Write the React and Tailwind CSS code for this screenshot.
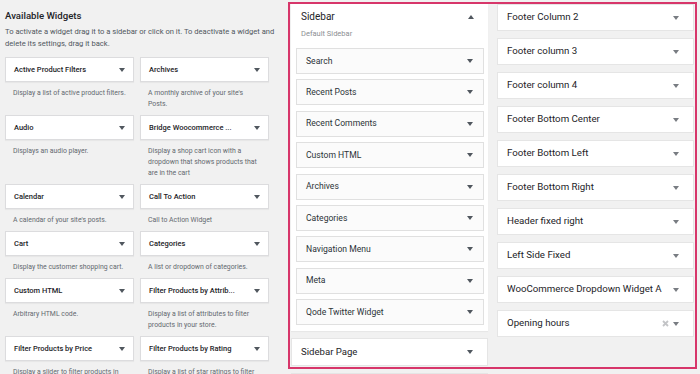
import React from 'react'

const available = [
  ['Active Product Filters', ['Display a list of active product filters.']],
  ['Archives', ["A monthly archive of your site's", 'Posts.']],
  ['Audio', ['Displays an audio player.']],
  ['Bridge Woocommerce ...', ['Display a shop cart icon with a', 'dropdown that shows products that', 'are in the cart']],
  ['Calendar', ["A calendar of your site's posts."]],
  ['Call To Action', ['Call to Action Widget']],
  ['Cart', ['Display the customer shopping cart.']],
  ['Categories', ['A list or dropdown of categories.']],
  ['Custom HTML', ['Arbitrary HTML code.']],
  ['Filter Products by Attrib...', ['Display a list of attributes to filter', 'products in your store.']],
  ['Filter Products by Price', ['Display a slider to filter products in', 'your store.']],
  ['Filter Products by Rating', ['Display a list of star ratings to filter', 'products in your store.']],
]

const sidebarWidgets = [
  'Search',
  'Recent Posts',
  'Recent Comments',
  'Custom HTML',
  'Archives',
  'Categories',
  'Navigation Menu',
  'Meta',
  'Qode Twitter Widget',
]

const areas = [
  'Footer Column 2',
  'Footer column 3',
  'Footer column 4',
  'Footer Bottom Center',
  'Footer Bottom Left',
  'Footer Bottom Right',
  'Header fixed right',
  'Left Side Fixed',
  'WooCommerce Dropdown Widget A',
  'Opening hours',
]

function Arrow({ up = false, className = 'text-[#50575e]' }) {
  return (
    <svg width="6" height="4" viewBox="0 0 6 4" className={className}>
      <path d={up ? 'M0 4h6L3 0z' : 'M0 0h6L3 4z'} fill="currentColor" />
    </svg>
  )
}

function App() {
  return (
    <div
      className="relative flex h-[374px] w-[700px] overflow-hidden bg-[#f1f1f1] text-[#1d2327]"
      style={{ fontFamily: 'Roboto, "Open Sans", sans-serif' }}
    >
      {/* available widgets */}
      <div className="w-[269px] shrink-0 pl-[5px]">
        <h2 className="mt-[8px] text-[9.6px] font-medium leading-[16px]">Available Widgets</h2>
        <p className="mt-[2px] text-[7.6px] leading-[12px] text-[#50575e]">
          <span className="block whitespace-nowrap">
            To activate a widget drag it to a sidebar or click on it. To deactivate a widget and
          </span>
          <span className="block whitespace-nowrap">delete its settings, drag it back.</span>
        </p>
        <div className="mt-[7px] grid grid-cols-2 gap-x-[6px]">
          {available.map(([title, lines]) => (
            <div key={title}>
              <div className="flex h-[25px] items-center justify-between border border-[#dcdcde] bg-white pl-[8px] pr-[8px] shadow-[0_1px_1px_rgba(0,0,0,0.04)]">
                <span className="whitespace-nowrap text-[7.5px] font-medium">{title}</span>
                <Arrow />
              </div>
              <div className="px-[8px] pb-[5px] pt-[6px] text-[6.9px] leading-[11px] text-[#646970]">
                {lines.map((l) => (
                  <div key={l} className="whitespace-nowrap">
                    {l}
                  </div>
                ))}
              </div>
            </div>
          ))}
        </div>
      </div>

      {/* sidebar */}
      <div className="ml-[22px] w-[197px] shrink-0 pt-[3px]">
        <div className="bg-white pb-[6px] pl-[5px] pr-[4px] shadow-[0_1px_1px_rgba(0,0,0,0.04)]">
          <div className="flex items-center justify-between pl-[5px] pr-[10px] pt-[6px]">
            <span className="text-[10px] leading-[16px]">Sidebar</span>
            <Arrow up />
          </div>
          <div className="pl-[5px] pt-[3px] text-[7.5px] leading-[12px] text-[#8c8f94]">Default Sidebar</div>
          <div className="mt-[8px] flex flex-col gap-[5.4px]">
            {sidebarWidgets.map((w) => (
              <div
                key={w}
                className="flex h-[26px] items-center justify-between border border-[#e0e0e0] bg-[#fbfbfb] pl-[9px] pr-[10px]"
              >
                <span className="text-[8.6px] text-[#2c3338]">{w}</span>
                <Arrow />
              </div>
            ))}
          </div>
        </div>
        <div className="mt-[7px] flex h-[28px] items-center justify-between border border-[#e5e5e5] bg-white pl-[9px] pr-[14px]">
          <span className="text-[9.6px]">Sidebar Page</span>
          <Arrow />
        </div>
        <div className="mt-[7px] h-[28px] border border-[#e5e5e5] bg-white" />
      </div>

      {/* widget areas */}
      <div className="ml-[9px] flex w-[197px] shrink-0 flex-col gap-[7px] pt-[4px]">
        {areas.map((a) => (
          <div
            key={a}
            className="flex h-[27px] shrink-0 items-center justify-between border border-[#e5e5e5] bg-white pl-[9px] pr-[14px]"
          >
            <span className="whitespace-nowrap text-[9.7px]">{a}</span>
            <div className="flex items-center gap-[4px]">
              {a === 'Opening hours' ? (
                <svg width="7" height="7" viewBox="0 0 7 7" className="text-[#c3c4c7]">
                  <path d="M1 1l5 5M6 1L1 6" stroke="currentColor" strokeWidth="1.8" />
                </svg>
              ) : null}
              <Arrow className="text-[#787c82]" />
            </div>
          </div>
        ))}
      </div>

      {/* highlight */}
      <div className="pointer-events-none absolute left-[288px] top-[2px] h-[367px] w-[409px] border-2 border-[#d7366a]" />
    </div>
  )
}

export default App
